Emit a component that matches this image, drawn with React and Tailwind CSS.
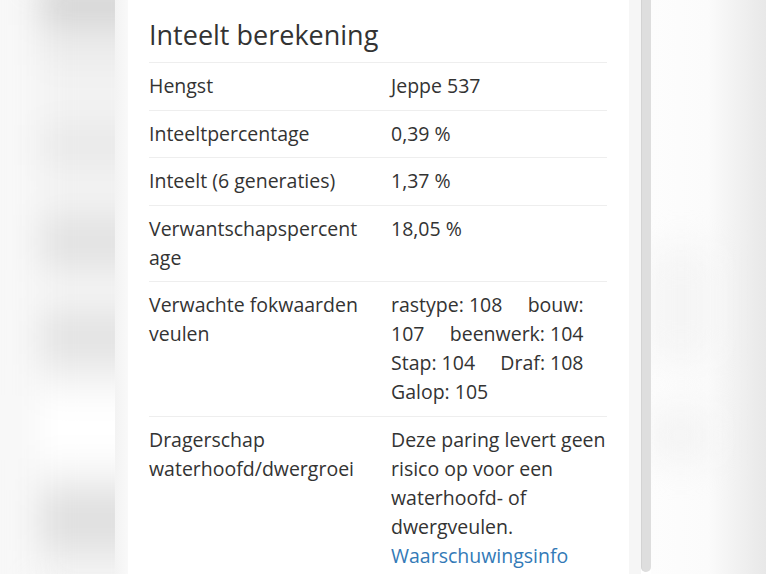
import React from 'react';

const rows = [
  { label: ['Hengst'], value: ['Jeppe 537'] },
  { label: ['Inteeltpercentage'], value: ['0,39 %'] },
  { label: ['Inteelt (6 generaties)'], value: ['1,37 %'] },
  { label: ['Verwantschapspercent', 'age'], value: ['18,05 %'] },
  {
    label: ['Verwachte fokwaarden', 'veulen'],
    value: [
      'rastype: 108\u00a0\u00a0\u00a0\u00a0 bouw:',
      '107\u00a0\u00a0\u00a0\u00a0 beenwerk: 104',
      'Stap: 104\u00a0\u00a0\u00a0\u00a0 Draf: 108',
      'Galop: 105',
    ],
  },
  {
    label: ['Dragerschap', 'waterhoofd/dwergroei'],
    value: ['Deze paring levert geen', 'risico op voor een', 'waterhoofd- of', 'dwergveulen.'],
    link: 'Waarschuwingsinfo',
  },
];

// blurred page behind the modal
function BlurLeft() {
  return (
    <div className="w-[115px] shrink-0 h-full overflow-hidden bg-[#f8f8f8]">
      <div className="flex flex-col ml-[40px] w-[110px] blur-[16px] -mt-[20px]">
        <div className="h-[45px] bg-[#d6d6d6]" />
        <div className="h-[40px] bg-[#ebebeb]" />
        <div className="h-[60px] bg-[#f2f2f2]" />
        <div className="h-[40px] bg-[#e9e9e9]" />
        <div className="h-[50px] bg-[#f2f2f2]" />
        <div className="h-[55px] bg-[#e3e3e3]" />
        <div className="h-[40px] bg-[#f4f4f4]" />
        <div className="h-[55px] bg-[#e4e4e4]" />
        <div className="h-[30px] bg-[#f4f4f4]" />
        <div className="h-[65px] bg-[#ffffff]" />
        <div className="h-[30px] bg-[#f5f5f5]" />
        <div className="h-[60px] bg-[#e0e0e0]" />
        <div className="h-[40px] bg-[#f2f2f2]" />
      </div>
    </div>
  );
}

function BlurRight() {
  return (
    <div className="flex-1 h-full overflow-hidden bg-gradient-to-r from-[#fdfdfd] via-[#fbfbfb] to-[#e8e8e8]">
      <div className="flex flex-col w-[60px] blur-[18px] mt-[250px]">
        <div className="h-[110px] bg-[#f4f4f4]" />
        <div className="h-[50px] bg-transparent" />
        <div className="h-[50px] bg-[#f3f3f3]" />
      </div>
    </div>
  );
}

function Row({ row }) {
  return (
    <div className="flex border-t border-[#eeeeee] pt-[8px] pb-[9.5px] leading-[29px] text-[19.5px]">
      <div className="w-[242px] shrink-0">
        {row.label.map((l) => (
          <div key={l} className="whitespace-nowrap">{l}</div>
        ))}
      </div>
      <div className="flex-1">
        {row.value.map((v) => (
          <div key={v} className="whitespace-nowrap">{v}</div>
        ))}
        {row.link && <a className="text-[#337ab7] whitespace-nowrap">{row.link}</a>}
      </div>
    </div>
  );
}

export default function App() {
  return (
    <div
      className="flex h-[574px] w-full overflow-hidden bg-white text-[#333333]"
      style={{ fontFamily: '"Open Sans", "Noto Sans", sans-serif' }}
    >
      <BlurLeft />
      <div className="w-[13px] shrink-0 bg-gradient-to-r from-[#f3f3f3] to-[#f9f9f9]" />

      {/* modal card */}
      <div className="w-[501px] shrink-0 h-full overflow-hidden bg-white px-[21px]">
        <h2 className="text-[27px] leading-[31px] pt-[19px] mb-[12px] font-normal">Inteelt berekening</h2>
        <div className="w-[458px]">
          {rows.map((r) => (
            <Row key={r.label[0]} row={r} />
          ))}
        </div>
      </div>

      <div className="w-[12px] shrink-0 bg-[#f6f6f6]" />
      <div className="w-[10px] shrink-0 h-[572px] bg-[#dedede] border-l border-[#d3d3d3] rounded-b-[5px]" />
      <BlurRight />
    </div>
  );
}
